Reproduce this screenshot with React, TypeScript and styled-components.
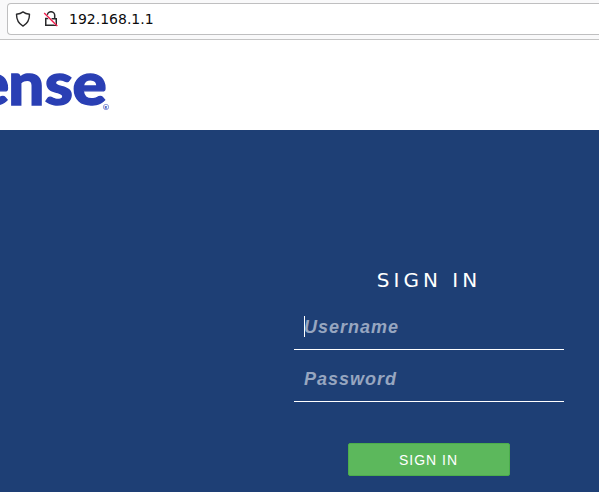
import React from "react";
import styled, { createGlobalStyle } from "styled-components";

const GlobalStyle = createGlobalStyle`
  *, *::before, *::after { box-sizing: border-box; }
  html, body { margin: 0; overflow: hidden; }
`;

const Page = styled.div`
  width: 599px;
  height: 492px;
  display: flex;
  flex-direction: column;
  overflow: hidden;
  font-family: "Liberation Sans", Arial, sans-serif;
`;

const Toolbar = styled.div`
  flex: none;
  height: 40px;
  padding: 3px 0 4px 7px;
  background: #f9f9fa;
  border-bottom: 1px solid #c4c4c4;
`;

const AddressBar = styled.div`
  height: 32px;
  display: flex;
  align-items: center;
  padding-left: 7px;
  background: #fff;
  border: 1px solid #bfbfc0;
  border-right: 0;
  border-radius: 4px 0 0 4px;
`;

const BarIcon = styled.svg`
  display: block;
  flex: none;
  width: 16px;
  height: 16px;
  margin-right: 12px;
  fill: none;
`;

const Address = styled.span`
  margin-left: -2px;
  font: 14px/20px "DejaVu Sans", sans-serif;
  color: #0c0c0d;
`;

const Header = styled.header`
  flex: none;
  height: 90px;
  background: #fff;
`;

const Logo = styled.svg`
  display: block;
  font-family: Lato, sans-serif;
  font-weight: 900;
  fill: #2a3fb4;
`;

const Main = styled.main`
  flex: 1;
  padding: 138px 0 0 294px;
  background: #1e3f75;
`;

const LoginForm = styled.form`
  width: 270px;
  display: flex;
  flex-direction: column;
  align-items: center;
`;

const Title = styled.h1`
  margin: 0 0 13px;
  font: 20px/24px "DejaVu Sans", sans-serif;
  letter-spacing: 4px;
  color: #fff;
`;

const Field = styled.label`
  position: relative;
  width: 100%;
  height: 45px;
  margin-bottom: 7px;
  padding: 11px 10px 0;
  border-bottom: 1px solid #fff;
  font: italic bold 18px/22px "Liberation Sans", Arial, sans-serif;
  letter-spacing: 1px;
  color: #97a6c0;
`;

const Caret = styled.span`
  position: absolute;
  left: 10px;
  top: 11px;
  width: 1px;
  height: 21px;
  background: #fff;
`;

const SubmitButton = styled.button`
  width: 162px;
  height: 33px;
  margin-top: 34px;
  padding: 0 1px 0 0;
  border: 1px solid #4cae4c;
  border-radius: 2px;
  background: #5cb85c;
  color: #fff;
  font: 14px/20px "Liberation Sans", Arial, sans-serif;
  letter-spacing: 1px;
`;

const Shield = () => (
  <BarIcon viewBox="0 0 16 16" stroke="#29292b" strokeWidth="1.4" strokeLinejoin="round">
    <path d="M8 .9C6.300 2.200 4 3 1.500 3.300c0 5.300 1.700 9.200 6.500 11.800 4.800-2.600 6.500-6.500 6.500-11.800C12 3 9.700 2.200 8 .9z" />
  </BarIcon>
);

const InsecureLock = () => (
  <BarIcon viewBox="0 0 16 16" stroke="#29292b" strokeWidth="1.5">
    <path d="M4.300 4.300a3.700 3.600 0 0 1 7.400 0V7.500M5.500 7.500H2.750v6.750h10.500V7.750H8.500" />
    <path d="M1.200 2.100 12.500 13.200" stroke="#fff" strokeWidth="1.900" />
    <path d="M1.200 2.100 14.300 15.100" stroke="#ee1c4b" strokeWidth="1.400" />
  </BarIcon>
);

const LogoMark = () => (
  <Logo width="130" height="90" viewBox="0 0 130 90">
    <text
      y="65"
      fontSize="58.500"
      x="-22.900 7.500 41.100 66.500"
      transform="scale(1.090 1)"
      stroke="#2a3fb4"
      strokeWidth="1.400"
    >
      ense
    </text>
    <circle cx="106" cy="67" r="2.700" fill="none" stroke="#2a3fb4" strokeWidth=".5" />
    <text x="104.600" y="68.500" fontSize="4">R</text>
  </Logo>
);

export default function App() {
  return (
    <>
      <GlobalStyle />
      <Page>
        <Toolbar>
          <AddressBar>
            <Shield />
            <InsecureLock />
            <Address>192.168.1.1</Address>
          </AddressBar>
        </Toolbar>
        <Header>
          <LogoMark />
        </Header>
        <Main>
          <LoginForm>
            <Title>SIGN IN</Title>
            <Field>
              <Caret />
              Username
            </Field>
            <Field>Password</Field>
            <SubmitButton type="button">SIGN IN</SubmitButton>
          </LoginForm>
        </Main>
      </Page>
    </>
  );
}
